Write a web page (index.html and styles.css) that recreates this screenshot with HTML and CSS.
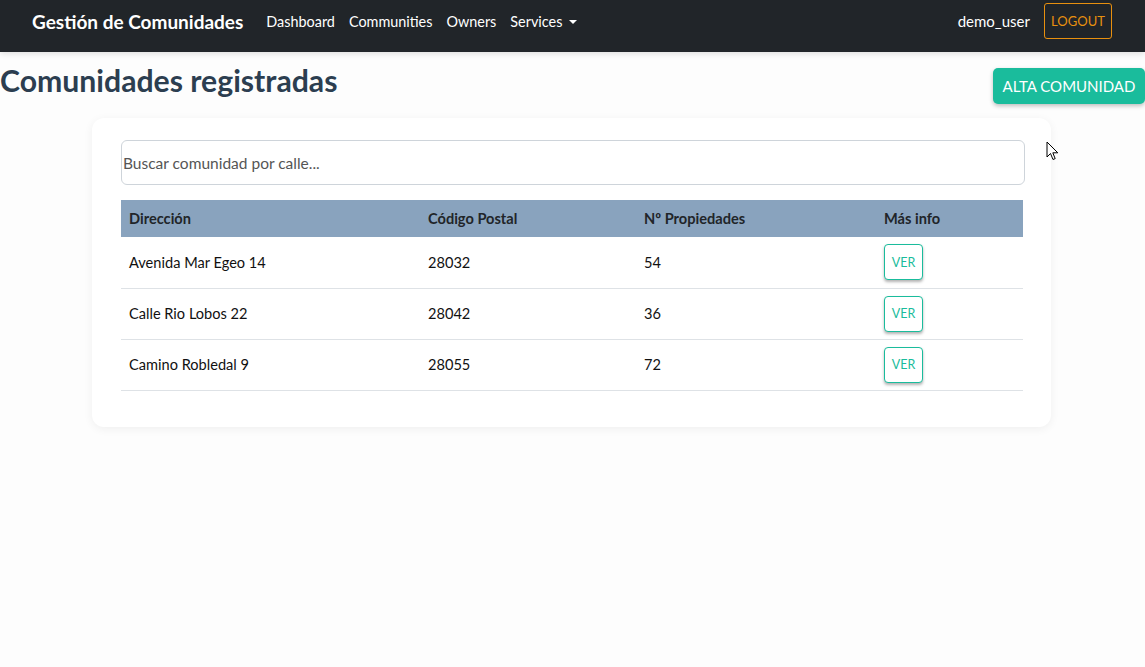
FILE: index.html
```html
<!DOCTYPE html>
<html lang="es">
<head>
<meta charset="utf-8">
<title>Comunidades registradas</title>
<link rel="stylesheet" href="styles.css">
</head>
<body>
<nav class="navbar">
  <div class="nav-left">
    <span class="brand">Gestión de Comunidades</span>
    <ul class="nav-links">
      <li>Dashboard</li>
      <li>Communities</li>
      <li>Owners</li>
      <li class="dropdown">Services <span class="caret"></span></li>
    </ul>
  </div>
  <div class="nav-right">
    <span class="user">demo_user</span>
    <button class="btn-logout">LOGOUT</button>
  </div>
</nav>
<main class="page">
  <div class="page-head">
    <h1>Comunidades registradas</h1>
    <button class="btn-alta">ALTA COMUNIDAD</button>
  </div>
  <section class="card">
    <input class="search" type="text" placeholder="Buscar comunidad por calle...">
    <table class="tbl">
      <thead>
        <tr><th class="c1">Dirección</th><th class="c2">Código Postal</th><th class="c3">Nº Propiedades</th><th class="c4">Más info</th></tr>
      </thead>
      <tbody>
        <tr><td>Avenida Mar Egeo 14</td><td>28032</td><td>54</td><td><button class="btn-ver">VER</button></td></tr>
        <tr><td>Calle Rio Lobos 22</td><td>28042</td><td>36</td><td><button class="btn-ver">VER</button></td></tr>
        <tr><td>Camino Robledal 9</td><td>28055</td><td>72</td><td><button class="btn-ver">VER</button></td></tr>
      </tbody>
    </table>
  </section>
</main>
<svg class="cursor" width="14" height="22" viewBox="0 0 14 22"><path d="M1 1 L1 16 L4.5 12.5 L7 18.5 L9.2 17.6 L6.8 11.8 L11.8 11.8 Z" fill="#fff" stroke="#000" stroke-width="1" stroke-linejoin="miter"/></svg>
</body>
</html>
```
FILE: styles.css
```css
* { box-sizing: border-box; }
html, body { margin: 0; padding: 0; }
body {
  font-family: Lato, "Open Sans", sans-serif;
  background: #fdfdfd;
  color: #212529;
  min-height: 667px;
  position: relative;
}
.navbar {
  height: 52px;
  background: #212529;
  display: flex;
  align-items: center;
  justify-content: space-between;
  padding: 0 33px 0 32px;
  box-shadow: 0 2px 6px rgba(0,0,0,0.12);
}
.nav-left { display: flex; align-items: center; margin-top: -10px; }
.brand {
  color: #fff;
  font-weight: 700;
  font-size: 19px;
  margin-right: 23px;
}
.nav-links { list-style: none; margin: 0; padding: 0; display: flex; gap: 14px; }
.nav-links li { color: #fff; font-size: 14.4px; }
.caret {
  display: inline-block;
  width: 0; height: 0;
  border-left: 4px solid transparent;
  border-right: 4px solid transparent;
  border-top: 4px solid #fff;
  vertical-align: 3px;
  margin-left: 3px;
}
.nav-right { display: flex; align-items: center; margin-top: -11px; }
.user { color: #fff; font-size: 15px; margin-right: 14px; }
.btn-logout {
  background: transparent;
  border: 1px solid #e8900f;
  color: #e8900f;
  font-family: inherit;
  font-size: 13px;
  width: 68px;
  height: 36px;
  border-radius: 3px;
  padding: 0;
}
.page-head {
  display: flex;
  justify-content: space-between;
  align-items: flex-start;
  padding-top: 10px;
}
h1 {
  margin: 0;
  font-size: 30.2px;
  font-weight: 700;
  color: #2c3e50;
  line-height: 36px;
}
.btn-alta {
  margin-top: 6px;
  background: #1abc9c;
  color: #fff;
  border: none;
  border-radius: 5px;
  font-family: inherit;
  font-size: 15px;
  height: 36px;
  width: 152px;
  padding: 0;
  box-shadow: 0 2px 4px rgba(0,0,0,0.25);
}
.card {
  width: 959px;
  margin: 14px 0 0 92px;
  background: #fff;
  border-radius: 12px;
  box-shadow: 0 2px 10px rgba(0,0,0,0.06);
  padding: 22px 27px 36px 29px;
}
.search {
  display: block;
  width: 904px;
  height: 45px;
  border: 1px solid #ced4da;
  border-radius: 6px;
  padding: 0 1px;
  font-family: inherit;
  font-size: 15.5px;
  color: #212529;
  margin-bottom: 15px;
}
.search::placeholder { color: #555; }
.tbl {
  width: 902px;
  border-collapse: collapse;
  font-size: 14.6px;
}
.tbl th {
  background: #89a3be;
  text-align: left;
  font-weight: 700;
  height: 37px;
  padding: 0 8px;
  color: #212529;
}
.tbl th.c1 { width: 299px; }
.tbl th.c2 { width: 216px; }
.tbl th.c3 { width: 240px; }
.tbl td {
  height: 51px;
  padding: 0 8px;
  border-bottom: 1px solid #dee2e6;
  color: #111;
}
.btn-ver {
  width: 39px;
  height: 36px;
  background: #fff;
  border: 1px solid #1abc9c;
  border-radius: 4px;
  color: #1abc9c;
  font-family: inherit;
  font-size: 12.5px;
  padding: 0;
  box-shadow: 0 2px 3px rgba(0,0,0,0.3);
}
.cursor { position: absolute; left: 1046px; top: 141px; }
```
